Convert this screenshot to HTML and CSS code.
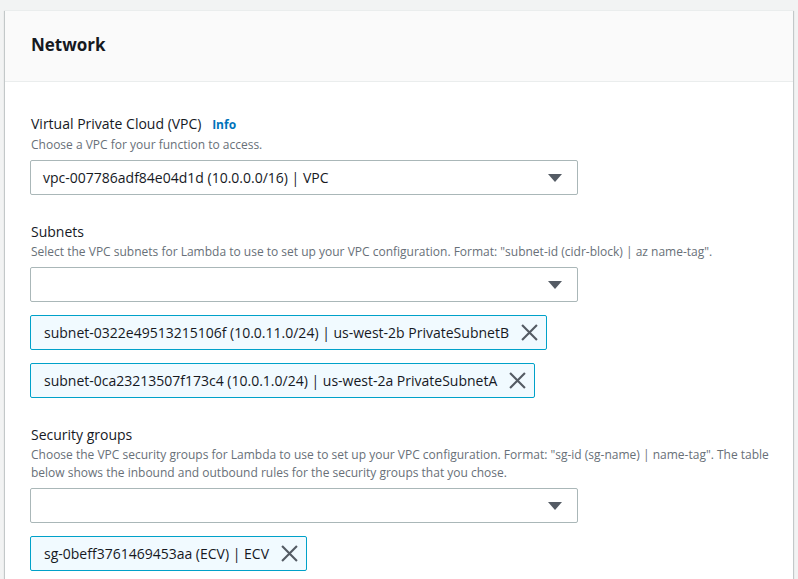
FILE: index.html
```html
<!DOCTYPE html>
<html>
<head>
<meta charset="utf-8">
<link rel="stylesheet" href="styles.css">
</head>
<body>
<div class="card">
  <div class="card-header"><h2 class="title">Network</h2></div>
  <div class="card-body">
    <div class="field">
      <div class="label">Virtual Private Cloud (VPC) <span class="info">Info</span></div>
      <div class="desc">Choose a VPC for your function to access.</div>
      <div class="select"><span class="value">vpc-007786adf84e04d1d (10.0.0.0/16) | VPC</span><span class="caret"></span></div>
    </div>
    <div class="field">
      <div class="label">Subnets</div>
      <div class="desc">Select the VPC subnets for Lambda to use to set up your VPC configuration. Format: "subnet-id (cidr-block) | az name-tag".</div>
      <div class="select"><span class="value"></span><span class="caret"></span></div>
      <div class="tokens">
        <div class="token"><span>subnet-0322e49513215106f (10.0.11.0/24) | us-west-2b PrivateSubnetB</span>
          <svg class="x" viewBox="0 0 16 16"><path d="M1 1 L15 15 M15 1 L1 15"/></svg></div>
        <div class="token"><span>subnet-0ca23213507f173c4 (10.0.1.0/24) | us-west-2a PrivateSubnetA</span>
          <svg class="x" viewBox="0 0 16 16"><path d="M1 1 L15 15 M15 1 L1 15"/></svg></div>
      </div>
    </div>
    <div class="field">
      <div class="label">Security groups</div>
      <div class="desc">Choose the VPC security groups for Lambda to use to set up your VPC configuration. Format: "sg-id (sg-name) | name-tag". The table below shows the inbound and outbound rules for the security groups that you chose.</div>
      <div class="select"><span class="value"></span><span class="caret"></span></div>
      <div class="tokens">
        <div class="token"><span>sg-0beff3761469453aa (ECV) | ECV</span>
          <svg class="x" viewBox="0 0 16 16"><path d="M1 1 L15 15 M15 1 L1 15"/></svg></div>
      </div>
    </div>
  </div>
</div>
</body>
</html>
```
FILE: styles.css
```css
html, body { margin: 0; padding: 0; }
body {
  background: #f2f3f3;
  font-family: "Open Sans", "Noto Sans", sans-serif;
  color: #16191f;
  padding: 10px 5px 0 5px;
  overflow: hidden;
  height: 579px;
  box-sizing: border-box;
}
.card {
  width: 788px;
  background: #fff;
  border-top: 1px solid #eaeded;
  box-shadow: 0 1px 1px 0 rgba(0,28,36,.3), 1px 1px 1px 0 rgba(0,28,36,.15), -1px 1px 1px 0 rgba(0,28,36,.15);
  min-height: 600px;
}
.card-header {
  background: #fafafa;
  height: 70px;
  border-bottom: 1px solid #eaeded;
  display: flex;
  align-items: center;
  padding-left: 26px;
}
.title {
  margin: 0;
  font-size: 17px;
  font-weight: 700;
  line-height: 22px;
  color: #16191f;
  position: relative;
  top: -1px;
}
.card-body {
  padding: 32px 16px 0 25px;
}
.field { margin-bottom: 27px; }
.label {
  font-size: 14px;
  line-height: 20px;
  color: #16191f;
  padding-left: 1px;
}
.info {
  color: #0073bb;
  font-size: 12px;
  font-weight: 700;
  margin-left: 7px;
}
.desc {
  font-size: 12px;
  line-height: 18px;
  color: #687078;
  margin-top: 1px;
  padding-left: 1px;
}
.select {
  margin-top: 6px;
  width: 548px;
  height: 35px;
  box-sizing: border-box;
  border: 1px solid #aab7b8;
  border-radius: 2px;
  display: flex;
  align-items: center;
  justify-content: space-between;
  padding: 0 15px 0 12px;
}
.value { font-size: 14px; color: #16191f; }
.caret {
  width: 0; height: 0;
  border-left: 7px solid transparent;
  border-right: 7px solid transparent;
  border-top: 8px solid #545b64;
}
.tokens {
  display: flex;
  flex-direction: column;
  align-items: flex-start;
  gap: 13px;
  margin-top: 13px;
}
.token {
  height: 35px;
  box-sizing: border-box;
  background: #f1faff;
  border: 1px solid #00a1c9;
  border-radius: 2px;
  display: flex;
  align-items: center;
  padding: 0 8px 0 13px;
  font-size: 14px;
  color: #16191f;
}
.x {
  width: 17px; height: 17px;
  margin-left: 12px;
  fill: none;
  stroke: #545b64;
  stroke-width: 2;
}
```
